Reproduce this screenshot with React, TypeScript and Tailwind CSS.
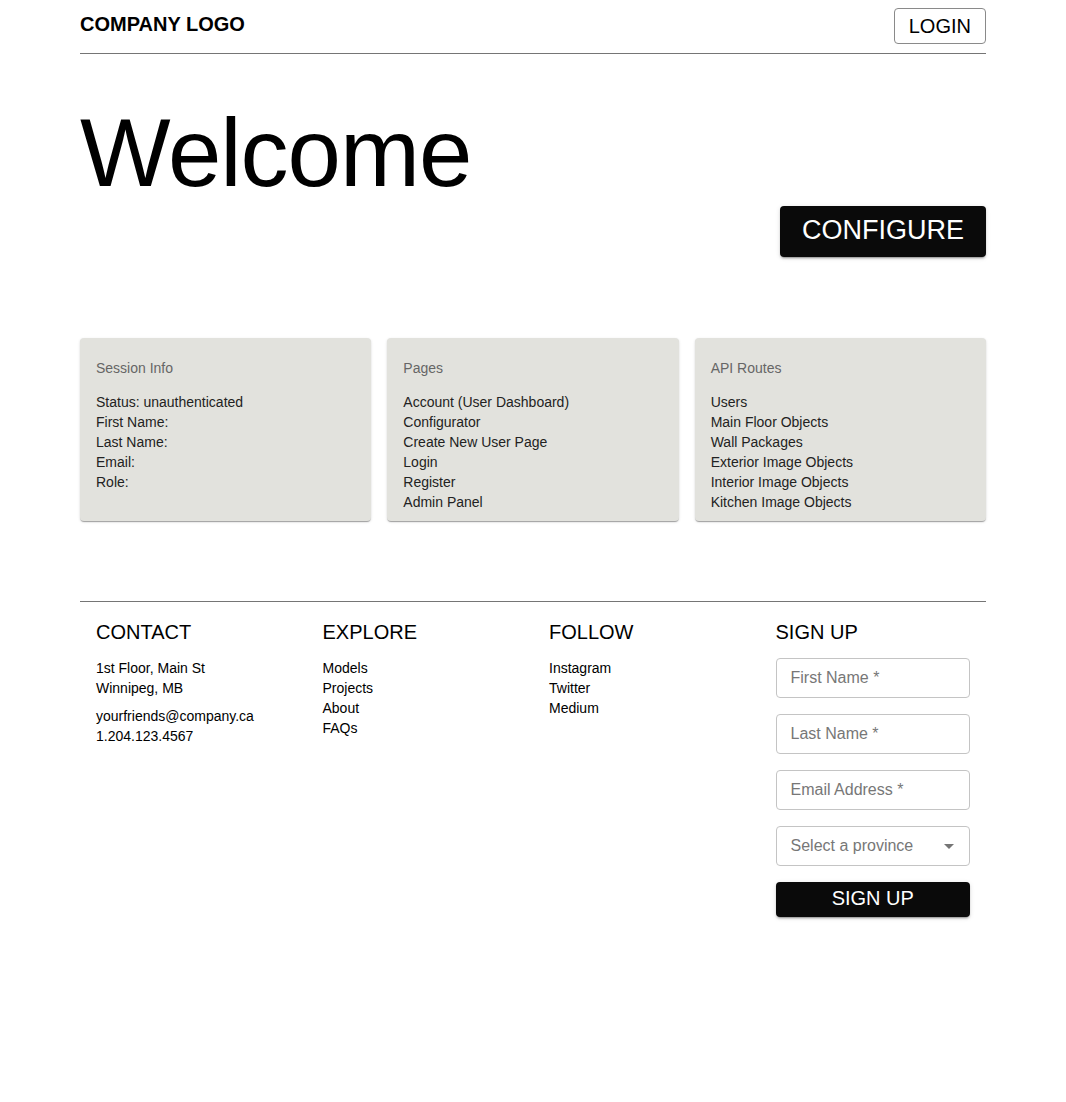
import React from 'react';

const sessionRows = ['Status: unauthenticated', 'First Name:', 'Last Name:', 'Email:', 'Role:'];
const pageRows = ['Account (User Dashboard)', 'Configurator', 'Create New User Page', 'Login', 'Register', 'Admin Panel'];
const apiRows = ['Users', 'Main Floor Objects', 'Wall Packages', 'Exterior Image Objects', 'Interior Image Objects', 'Kitchen Image Objects'];

const InfoCard: React.FC<{ title: string; rows: string[] }> = ({ title, rows }) => {
  return (
    <div className="rounded bg-[#e2e2dd] px-4 pt-5 pb-[9px] shadow-[0_2px_1px_-1px_rgba(0,0,0,0.2),0_1px_1px_0_rgba(0,0,0,0.14),0_1px_3px_0_rgba(0,0,0,0.12)]">
      <p className="text-sm leading-5 text-[#666]">{title}</p>
      <ul className="mt-[14px] text-sm leading-5 text-[#222]">
        {rows.map((r) => (
          <li key={r}>{r}</li>
        ))}
      </ul>
    </div>
  );
};

const TextField: React.FC<{ label: string }> = ({ label }) => {
  return (
    <input
      placeholder={label}
      className="h-10 w-full rounded border border-[#c4c4c4] bg-white px-[14px] text-base text-black outline-none placeholder:text-[#777]"
    />
  );
};

export default function App() {
  return (
    <div className="min-h-[1102px] bg-white font-['Liberation_Sans',Arial,sans-serif] text-black">
      <div className="mx-auto w-[906px]">
        <header className="flex items-start justify-between border-b border-[#757575] pt-2 pb-[9px]">
          <span className="mt-1 text-[20px] font-bold leading-6">COMPANY LOGO</span>
          <button className="h-9 rounded border border-[#8a8a8a] px-[14px] text-[20px] leading-6">LOGIN</button>
        </header>

        <h1 className="mt-[44px] text-[96px] font-normal leading-[109px] tracking-[-1px]">Welcome</h1>
        <div className="-mt-px flex justify-end">
          <button className="h-[51px] rounded bg-[#0a0a0a] px-[22px] pb-1 text-[27px] leading-8 text-white shadow-[0_3px_1px_-2px_rgba(0,0,0,0.2),0_2px_2px_0_rgba(0,0,0,0.14),0_1px_5px_0_rgba(0,0,0,0.12)]">
            CONFIGURE
          </button>
        </div>

        <section className="mt-[81px] grid grid-cols-3 gap-4">
          <InfoCard title="Session Info" rows={sessionRows} />
          <InfoCard title="Pages" rows={pageRows} />
          <InfoCard title="API Routes" rows={apiRows} />
        </section>

        <footer className="mt-20 grid grid-cols-4 border-t border-[#757575]">
          <div className="px-4 pt-[14px]">
            <h2 className="text-[20px] leading-8">CONTACT</h2>
            <div className="mt-[10px] text-sm leading-5">
              <p>1st Floor, Main St</p>
              <p>Winnipeg, MB</p>
              <p className="mt-2">yourfriends@company.ca</p>
              <p>1.204.123.4567</p>
            </div>
          </div>
          <div className="px-4 pt-[14px]">
            <h2 className="text-[20px] leading-8">EXPLORE</h2>
            <ul className="mt-[10px] text-sm leading-5">
              <li>Models</li>
              <li>Projects</li>
              <li>About</li>
              <li>FAQs</li>
            </ul>
          </div>
          <div className="px-4 pt-[14px]">
            <h2 className="text-[20px] leading-8">FOLLOW</h2>
            <ul className="mt-[10px] text-sm leading-5">
              <li>Instagram</li>
              <li>Twitter</li>
              <li>Medium</li>
            </ul>
          </div>
          <div className="px-4 pt-[14px]">
            <h2 className="text-[20px] leading-8">SIGN UP</h2>
            <form className="mt-[10px] flex flex-col gap-4">
              <TextField label="First Name *" />
              <TextField label="Last Name *" />
              <TextField label="Email Address *" />
              <div className="flex h-10 w-full items-center justify-between rounded border border-[#c4c4c4] pl-[14px] pr-[8px] text-base text-[#777]">
                <span>Select a province</span>
                <svg width="24" height="24" viewBox="0 0 24 24" fill="#757575">
                  <path d="M7 10l5 5 5-5z" />
                </svg>
              </div>
              <button
                type="button"
                className="h-[35px] w-full rounded bg-[#0a0a0a] pb-[3px] text-[20px] leading-6 text-white shadow-[0_3px_1px_-2px_rgba(0,0,0,0.2),0_2px_2px_0_rgba(0,0,0,0.14),0_1px_5px_0_rgba(0,0,0,0.12)]"
              >
                SIGN UP
              </button>
            </form>
          </div>
        </footer>
      </div>
    </div>
  );
}
